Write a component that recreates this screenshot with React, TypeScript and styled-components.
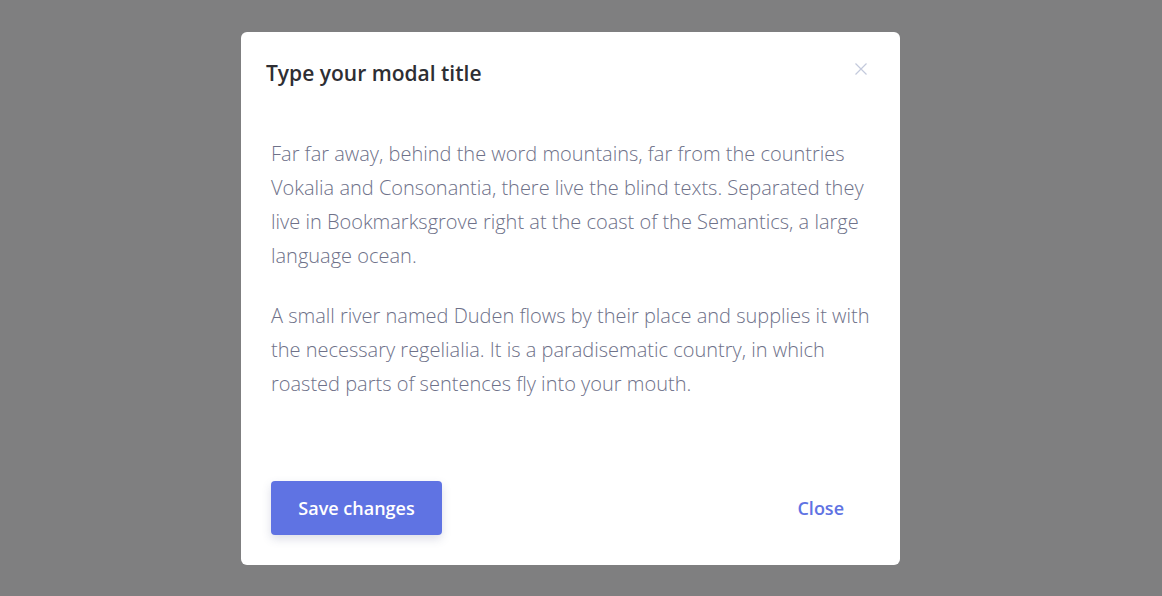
import React from 'react';
import styled, { createGlobalStyle } from 'styled-components';

const GlobalStyle = createGlobalStyle`
  html, body {
    margin: 0;
    padding: 0;
    height: 100%;
  }

  body {
    background: #7f7f80;
    font-family: 'Open Sans', 'Noto Sans', sans-serif;
  }

  #root {
    min-height: 100vh;
  }
`;

function App() {
  return (
    <>
      <GlobalStyle />
      <Backdrop>
        <Modal>
          <Header>
            <Title>Type your modal title</Title>
            <CloseIcon aria-label="Close">
              <svg width="12" height="12" viewBox="0 0 12 12">
                <path d="M0.5 0.5 L11.5 11.5 M11.5 0.5 L0.5 11.5" stroke="#c3c9dc" strokeWidth="1.2" />
              </svg>
            </CloseIcon>
          </Header>

          <Body>
            <Text>
              Far far away, behind the word mountains, far from the countries Vokalia and
              Consonantia, there live the blind texts. Separated they live in Bookmarksgrove
              right at the coast of the Semantics, a large language ocean.
            </Text>
            <Text>
              A small river named Duden flows by their place and supplies it with the
              necessary regelialia. It is a paradisematic country, in which roasted parts of
              sentences fly into your mouth.
            </Text>
          </Body>

          <Footer>
            <PrimaryButton>Save changes</PrimaryButton>
            <LinkButton>Close</LinkButton>
          </Footer>
        </Modal>
      </Backdrop>
    </>
  );
}

export default App;

const Backdrop = styled.div`
  display: flex;
  justify-content: center;
  padding-top: 32px;
  padding-right: 21px;
`;

const Modal = styled.div`
  width: 659px;
  height: 533px;
  box-sizing: border-box;
  background: #ffffff;
  border-radius: 6px;
  display: flex;
  flex-direction: column;
`;

const Header = styled.div`
  display: flex;
  justify-content: space-between;
  align-items: flex-start;
  padding: 27px 33px 0 25px;
`;

const Title = styled.h2`
  margin: 0;
  font-size: 21px;
  line-height: 29px;
  font-weight: 600;
  color: #2e2e33;
`;

const CloseIcon = styled.span`
  display: flex;
  margin-top: 4px;
  cursor: pointer;
`;

const Body = styled.div`
  padding: 49px 30px 0 30px;
`;

const Text = styled.p`
  margin: 0 0 26px;
  font-size: 20px;
  line-height: 34px;
  font-weight: 300;
  color: #6e7189;

  &:last-child {
    margin-bottom: 0;
  }
`;

const Footer = styled.div`
  margin-top: auto;
  display: flex;
  justify-content: space-between;
  align-items: center;
  padding: 0 56px 30px 30px;
`;

const PrimaryButton = styled.button`
  width: 171px;
  height: 54px;
  border: none;
  border-radius: 4px;
  background: #5f73e3;
  color: #ffffff;
  font-family: inherit;
  font-size: 18px;
  font-weight: 600;
  box-shadow: 0 4px 10px rgba(60, 70, 120, 0.18);
  cursor: pointer;
`;

const LinkButton = styled.button`
  border: none;
  background: none;
  padding: 0;
  color: #5f73e3;
  font-family: inherit;
  font-size: 18px;
  font-weight: 600;
  cursor: pointer;
`;
